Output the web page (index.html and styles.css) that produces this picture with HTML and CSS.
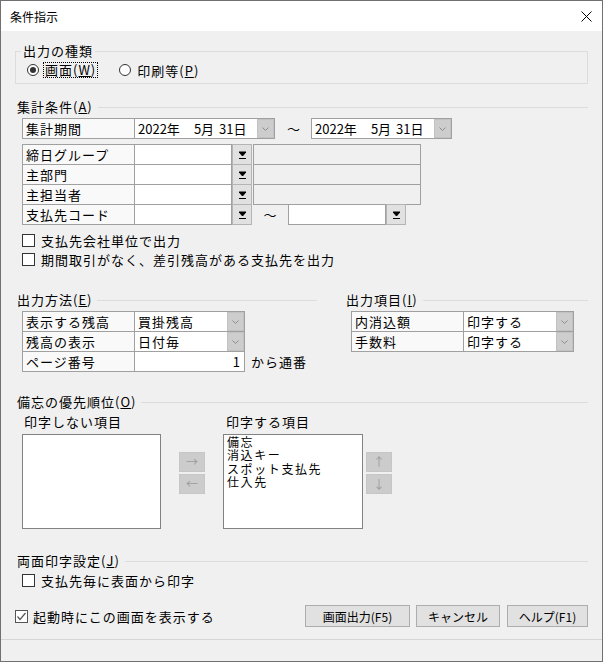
FILE: index.html
```html
<!DOCTYPE html>
<html lang="ja">
<head>
    <meta charset="UTF-8">
    <title>条件指示</title>
    <link rel="stylesheet" href="styles.css">
</head>
<body>
<div class="window">
    <div class="titlebar">
        <span class="title">条件指示</span>
        <svg class="close" width="11" height="11" viewBox="0 0 11 11"><path d="M0.5 0.5 L10.5 10.5 M10.5 0.5 L0.5 10.5" stroke="#000" stroke-width="1"/></svg>
    </div>

    <div class="content">
        <!-- 出力の種類 -->
        <fieldset class="kind">
            <legend>出力の種類</legend>
            <div class="radios">
                <span class="radio on"><span class="dot"></span><span class="focus">画面(<u>W</u>)</span></span>
                <span class="radio"><span class="dot"></span><span class="rtext">印刷等(<u>P</u>)</span></span>
            </div>
        </fieldset>

        <!-- 集計条件 -->
        <div class="head">集計条件(<u>A</u>)</div>
        <div class="date-row">
            <div class="cell lbl">集計期間</div>
            <div class="combo date">
                <span class="dtext"><span class="y">2022年</span><span class="m">5月</span><span class="d">31日</span></span>
                <span class="dd"><svg width="7" height="4" viewBox="0 0 7 4"><polyline points="0.5,0.5 3.5,3.5 6.5,0.5" fill="none" stroke="#8c8c8c"/></svg></span>
            </div>
            <span class="tilde">～</span>
            <div class="combo date">
                <span class="dtext"><span class="y">2022年</span><span class="m">5月</span><span class="d">31日</span></span>
                <span class="dd"><svg width="7" height="4" viewBox="0 0 7 4"><polyline points="0.5,0.5 3.5,3.5 6.5,0.5" fill="none" stroke="#8c8c8c"/></svg></span>
            </div>
        </div>

        <div class="ftable">
            <div class="trow">
                <div class="cell lbl">締日グループ</div>
                <div class="cell inp"></div>
                <div class="pick"><svg width="7" height="8" viewBox="0 0 7 8"><path d="M0 1 H7 L3.5 5 Z M0 7.5 H7" fill="#000" stroke="#000" stroke-width="1"/></svg></div>
                <div class="cell disp"></div>
            </div>
            <div class="trow">
                <div class="cell lbl">主部門</div>
                <div class="cell inp"></div>
                <div class="pick"><svg width="7" height="8" viewBox="0 0 7 8"><path d="M0 1 H7 L3.5 5 Z M0 7.5 H7" fill="#000" stroke="#000" stroke-width="1"/></svg></div>
                <div class="cell disp"></div>
            </div>
            <div class="trow">
                <div class="cell lbl">主担当者</div>
                <div class="cell inp"></div>
                <div class="pick"><svg width="7" height="8" viewBox="0 0 7 8"><path d="M0 1 H7 L3.5 5 Z M0 7.5 H7" fill="#000" stroke="#000" stroke-width="1"/></svg></div>
                <div class="cell disp"></div>
            </div>
            <div class="trow">
                <div class="cell lbl">支払先コード</div>
                <div class="cell inp"></div>
                <div class="pick"><svg width="7" height="8" viewBox="0 0 7 8"><path d="M0 1 H7 L3.5 5 Z M0 7.5 H7" fill="#000" stroke="#000" stroke-width="1"/></svg></div>
                <span class="tilde short">～</span>
                <div class="cell inp"></div>
                <div class="pick"><svg width="7" height="8" viewBox="0 0 7 8"><path d="M0 1 H7 L3.5 5 Z M0 7.5 H7" fill="#000" stroke="#000" stroke-width="1"/></svg></div>
            </div>
        </div>

        <div class="checks">
            <div class="check"><span class="box"></span>支払先会社単位で出力</div>
            <div class="check"><span class="box"></span>期間取引がなく、差引残高がある支払先を出力</div>
        </div>

        <!-- 出力方法 / 出力項目 -->
        <div class="cols">
            <div class="col left">
                <div class="head">出力方法(<u>E</u>)</div>
                <div class="otable">
                    <div class="trow">
                        <div class="cell lbl">表示する残高</div>
                        <div class="combo sel"><span class="stext">買掛残高</span><span class="dd"><svg width="7" height="4" viewBox="0 0 7 4"><polyline points="0.5,0.5 3.5,3.5 6.5,0.5" fill="none" stroke="#8c8c8c"/></svg></span></div>
                    </div>
                    <div class="trow">
                        <div class="cell lbl">残高の表示</div>
                        <div class="combo sel"><span class="stext">日付毎</span><span class="dd"><svg width="7" height="4" viewBox="0 0 7 4"><polyline points="0.5,0.5 3.5,3.5 6.5,0.5" fill="none" stroke="#8c8c8c"/></svg></span></div>
                    </div>
                    <div class="trow">
                        <div class="cell lbl">ページ番号</div>
                        <div class="cell num">1</div>
                        <span class="after">から通番</span>
                    </div>
                </div>
            </div>
            <div class="col right">
                <div class="head">出力項目(<u>I</u>)</div>
                <div class="otable">
                    <div class="trow">
                        <div class="cell lbl">内消込額</div>
                        <div class="combo sel"><span class="stext">印字する</span><span class="dd"><svg width="7" height="4" viewBox="0 0 7 4"><polyline points="0.5,0.5 3.5,3.5 6.5,0.5" fill="none" stroke="#8c8c8c"/></svg></span></div>
                    </div>
                    <div class="trow">
                        <div class="cell lbl">手数料</div>
                        <div class="combo sel"><span class="stext">印字する</span><span class="dd"><svg width="7" height="4" viewBox="0 0 7 4"><polyline points="0.5,0.5 3.5,3.5 6.5,0.5" fill="none" stroke="#8c8c8c"/></svg></span></div>
                    </div>
                </div>
            </div>
        </div>

        <!-- 備忘の優先順位 -->
        <div class="head memo-head">備忘の優先順位(<u>O</u>)</div>
        <div class="lists">
            <div class="lcol">
                <div class="lcap">印字しない項目</div>
                <div class="listbox"></div>
            </div>
            <div class="arrows">
                <span class="abtn">→</span>
                <span class="abtn">←</span>
            </div>
            <div class="lcol second">
                <div class="lcap">印字する項目</div>
                <div class="listbox">
                    <div>備忘</div>
                    <div>消込キー</div>
                    <div>スポット支払先</div>
                    <div>仕入先</div>
                </div>
            </div>
            <div class="arrows updown">
                <span class="abtn">↑</span>
                <span class="abtn">↓</span>
            </div>
        </div>

        <!-- 両面印字設定 -->
        <div class="head duplex-head">両面印字設定(<u>J</u>)</div>
        <div class="check duplex"><span class="box"></span>支払先毎に表面から印字</div>

        <div class="bottom">
            <div class="check startup"><span class="box"><svg width="11" height="11" viewBox="0 0 11 11"><polyline points="1.5,5.5 4,8.5 9.5,2" fill="none" stroke="#555" stroke-width="1.2"/></svg></span>起動時にこの画面を表示する</div>
            <div class="buttons">
                <button class="btn b1">画面出力(F5)</button>
                <button class="btn b2">キャンセル</button>
                <button class="btn b3">ヘルプ(F1)</button>
            </div>
        </div>
    </div>
    <div class="status"></div>
</div>
</body>
</html>
```

FILE: styles.css
```css
* {
    box-sizing: border-box;
}

html, body {
    margin: 0;
    padding: 0;
}

body {
    font-family: "Noto Sans CJK JP", "Liberation Sans", sans-serif;
    font-size: 13px;
    color: #000;
    background: #fff;
}

u {
    text-decoration: underline;
    text-underline-offset: 1px;
}

.window {
    width: 603px;
    height: 662px;
    border: 1px solid #707070;
    background: #f0f0f0;
    display: flex;
    flex-direction: column;
}

.titlebar {
    height: 30px;
    background: #fff;
    display: flex;
    align-items: center;
    justify-content: space-between;
    padding: 0 10px 0 9px;
    flex: none;
}

.title {
    font-size: 12px;
}

.content {
    padding: 0 14px;
    letter-spacing: 1px;
}

/* group box */
.kind {
    margin: 12px 0 0 0;
    padding: 3px 0 5px 0;
    border: 1px solid #dcdcdc;
}

.kind legend {
    margin-left: 5px;
    padding: 0 2px;
    line-height: 16px;
}

.radios {
    display: flex;
    align-items: center;
    height: 16px;
    padding-left: 11px;
}

.radio {
    display: flex;
    align-items: center;
}

.radio .dot {
    width: 12px;
    height: 12px;
    border: 1px solid #333;
    border-radius: 50%;
    background: #fff;
    margin-right: 4px;
    display: flex;
    align-items: center;
    justify-content: center;
}

.radio.on .dot::after {
    content: "";
    width: 6px;
    height: 6px;
    border-radius: 50%;
    background: #333;
}

.focus {
    border: 1px dotted #000;
    padding: 0 1px;
    line-height: 14px;
}

.radio + .radio {
    margin-left: 21px;
}

.rtext {
    margin-left: 2px;
}

/* section headings with rule */
.head {
    display: flex;
    align-items: center;
    line-height: 16px;
    padding-left: 2px;
    margin-top: 15px;
    white-space: nowrap;
}

.head::after {
    content: "";
    flex: 1;
    border-top: 1px solid #dcdcdc;
    margin-left: 5px;
}

/* cells */
.cell {
    height: 21px;
    border: 1px solid #a0a0a0;
    background: #fff;
    line-height: 19px;
}

.lbl {
    width: 113px;
    padding-left: 3px;
    background: #f9f9f9;
}

.date-row {
    display: flex;
    margin: 3px 0 0 7px;
}

.combo {
    height: 21px;
    margin-left: -1px;
    border: 1px solid #a0a0a0;
    background: #fff;
    display: flex;
}

.date {
    width: 141px;
}

.dtext {
    flex: 1;
    line-height: 19px;
    letter-spacing: 0;
    padding-left: 3px;
}

.dtext .m {
    margin-left: 14px;
}

.dtext .d {
    margin-left: 5px;
}

.dd {
    width: 17px;
    background: #cdcdcd;
    border: 1px solid #c2c2c2;
    display: flex;
    align-items: center;
    justify-content: center;
}

.tilde {
    width: 37px;
    text-align: center;
    line-height: 21px;
    letter-spacing: 0;
}

.tilde.short {
    width: 36px;
}

.ftable {
    margin: 5px 0 0 7px;
}

.trow {
    display: flex;
    margin-top: -1px;
}

.trow:first-child {
    margin-top: 0;
}

.inp {
    width: 98px;
    margin-left: -1px;
}

.pick {
    width: 20px;
    height: 21px;
    background: #e1e1e1;
    border: 1px solid #b4b4b4;
    display: flex;
    align-items: center;
    justify-content: center;
}

.disp {
    width: 168px;
    margin-left: 1px;
    background: #f0f0f0;
}

.trow .tilde.short + .inp {
    margin-left: 0;
}

.trow .inp + .pick {
    margin-left: 0;
}

.checks {
    margin-top: 6px;
}

.check {
    display: flex;
    align-items: center;
    height: 19px;
    padding-left: 7px;
}

.box {
    width: 13px;
    height: 13px;
    border: 1px solid #333;
    background: #fff;
    margin-right: 6px;
    display: flex;
    align-items: center;
    justify-content: center;
}

/* output method / items */
.cols {
    display: flex;
    margin-top: 23px;
}

.col.left {
    width: 302px;
}

.col.right {
    margin-left: 27px;
    flex: 1;
}

.cols .head {
    margin-top: 0;
}

.otable {
    margin: 3px 0 0 7px;
}

.sel {
    width: 111px;
}

.stext {
    flex: 1;
    line-height: 19px;
    padding-left: 3px;
}

.num {
    width: 111px;
    margin-left: -1px;
    text-align: right;
    padding-right: 4px;
    letter-spacing: 0;
}

.after {
    line-height: 21px;
    margin-left: 6px;
}

/* memo priority */
.memo-head {
    margin-top: 22px;
}

.lists {
    display: flex;
    margin-top: 4px;
    padding-left: 7px;
}

.lcap {
    line-height: 16px;
    padding-left: 2px;
    margin-bottom: 4px;
}

.lcol {
    width: 139px;
}

.lcol.second {
    width: 140px;
    margin-left: 18px;
}

.lcol.second .lcap {
    padding-left: 3px;
}

.listbox {
    height: 95px;
    border: 1px solid #828282;
    background: #fff;
    padding: 0 3px;
    font-size: 12px;
    letter-spacing: 1.6px;
    line-height: 13.4px;
}

.arrows {
    display: flex;
    flex-direction: column;
    gap: 2px;
    margin: 38px 0 0 18px;
}

.arrows.updown {
    margin-left: 3px;
}

.abtn {
    width: 26px;
    height: 20px;
    background: #cccccc;
    border: 1px solid #c6c6c6;
    color: #9c9c9c;
    text-align: center;
    line-height: 18px;
    letter-spacing: 0;
    font-size: 12px;
}

/* duplex + bottom */
.duplex-head {
    margin-top: 24px;
}

.check.duplex {
    margin-top: 2px;
}

.bottom {
    display: flex;
    align-items: center;
    justify-content: space-between;
    margin-top: 15px;
    height: 22px;
}

.check.startup {
    padding-left: 0;
}

.check.startup .box {
    margin-right: 5px;
    border-color: #555;
}

.buttons {
    display: flex;
}

.btn {
    font-family: "Noto Sans CJK JP", sans-serif;
    font-size: 12px;
    height: 22px;
    background: #e1e1e1;
    border: 1px solid #adadad;
    color: #000;
    padding: 0;
    letter-spacing: 0;
}

.b1 {
    width: 105px;
}

.b2 {
    width: 84px;
    margin-left: 6px;
}

.b3 {
    width: 81px;
    margin-left: 7px;
}

.status {
    margin-top: 12px;
    border-top: 1px solid #d6d6d6;
    flex: 1;
}
```
